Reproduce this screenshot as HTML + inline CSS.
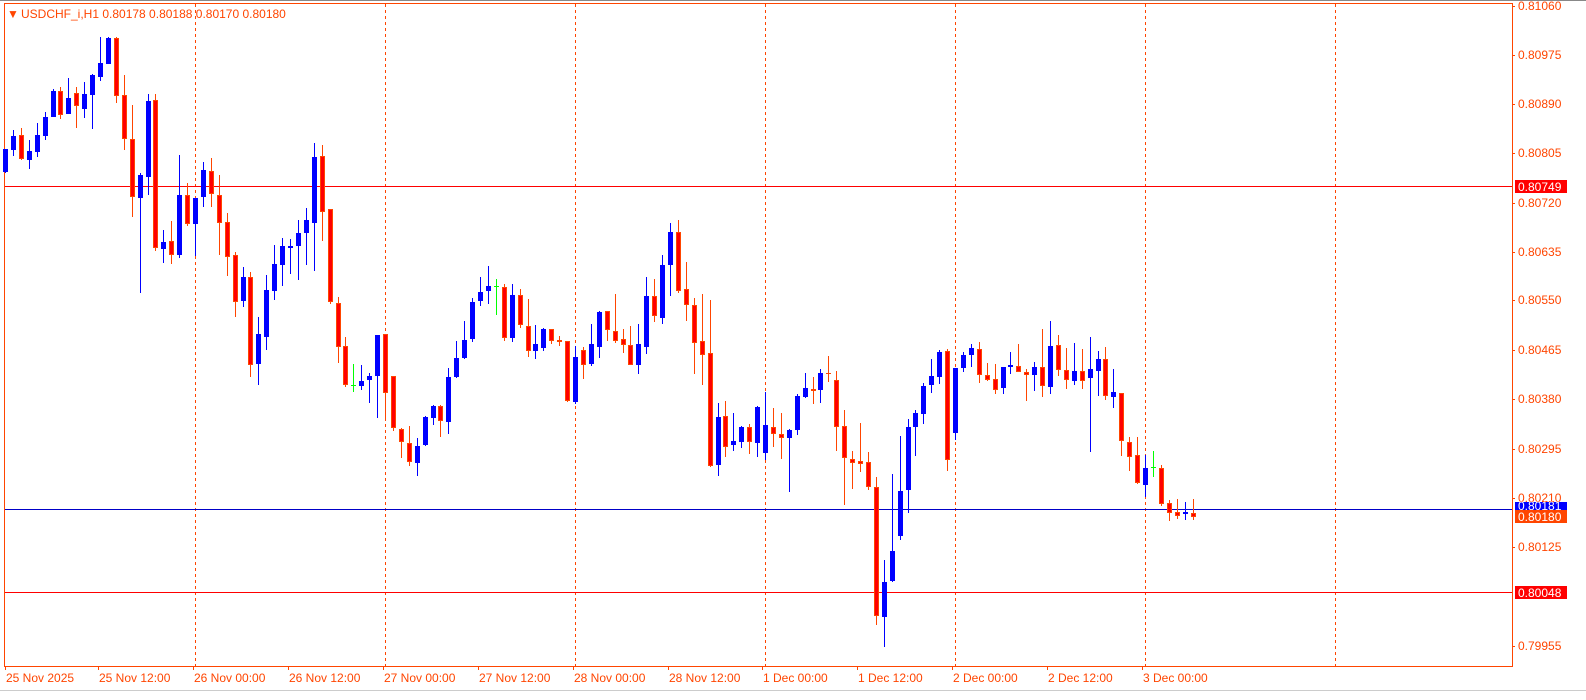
<!DOCTYPE html>
<html><head><meta charset="utf-8"><style>
html,body{margin:0;padding:0;background:#fff;width:1586px;height:700px;overflow:hidden}
svg{display:block}
text{font-family:"Liberation Sans",sans-serif;font-size:12px}
</style></head><body>
<svg id="s" width="1586" height="700" xmlns="http://www.w3.org/2000/svg">
<rect x="0" y="0" width="1586" height="700" fill="#fff"/>
<line x1="0" y1="0.5" x2="1586" y2="0.5" stroke="#888"/>
<line x1="0" y1="690.5" x2="1586" y2="690.5" stroke="#ccc"/>
<rect x="4.5" y="3.5" width="1508" height="663" fill="none" stroke="#ff4500"/>
<g id="grid" stroke="#ff4500" stroke-dasharray="3,3"></g>
<line x1="5" y1="186.5" x2="1512" y2="186.5" stroke="#ff0000"/>
<line x1="5" y1="509.5" x2="1512" y2="509.5" stroke="#0000c8"/>
<line x1="5" y1="592.5" x2="1512" y2="592.5" stroke="#ff0000"/>
<g id="c"></g>
<g id="ax" fill="#ff4500"></g>
<text x="7" y="18" fill="#ff4500" font-size="10">▼</text>
<text x="21" y="18" fill="#ff4500">USDCHF_i,H1  0.80178 0.80188 0.80170 0.80180</text>
<rect x="1515" y="180" width="52" height="13" fill="#ff0000"/>
<text x="1518" y="191" fill="#fff">0.80749</text>
<rect x="1515" y="502" width="52" height="8" fill="#0000ff"/>
<text x="1518" y="510" fill="#fff">0.80181</text>
<rect x="1515" y="510" width="52" height="13" fill="#ff4500"/>
<text x="1518" y="521" fill="#fff">0.80180</text>
<rect x="1515" y="586" width="52" height="13" fill="#ff0000"/>
<text x="1518" y="597" fill="#fff">0.80048</text>
</svg>
<script>
var NS="http://www.w3.org/2000/svg";
function el(p,n,a,t){var e=document.createElementNS(NS,n);for(var k in a)e.setAttribute(k,a[k]);if(t)e.textContent=t;p.appendChild(e);return e;}
var g=document.getElementById('grid');
[195,385,575,765,955,1145,1335].forEach(function(x){el(g,'line',{x1:x+.5,y1:4,x2:x+.5,y2:666});});
var ax=document.getElementById('ax');
var labs=[["0.81060",6],["0.80975",55],["0.80890",104],["0.80805",153],["0.80720",203],["0.80635",252],["0.80550",300],["0.80465",350],["0.80380",399],["0.80295",449],["0.80210",498],["0.80125",547],["0.79955",646]];
labs.forEach(function(l){el(ax,'rect',{x:1512,y:l[1],width:3,height:1});el(ax,'text',{x:1518,y:l[1]+4},l[0]);});
var tl=[["25 Nov 2025",6],["25 Nov 12:00",99],["26 Nov 00:00",194],["26 Nov 12:00",289],["27 Nov 00:00",384],["27 Nov 12:00",479],["28 Nov 00:00",574],["28 Nov 12:00",669],["1 Dec 00:00",763],["1 Dec 12:00",858],["2 Dec 00:00",953],["2 Dec 12:00",1048],["3 Dec 00:00",1143]];
tl.forEach(function(l){el(ax,'text',{x:l[1],y:682},l[0]);el(ax,'rect',{x:l[1]-1,y:666,width:1,height:4});});
var z1="b 363 435 363 432|b 303 383 321 366|r 297 395 318 392|b 333 423 369 396|b 282 386 318 371|b 249 335 264 323|b 180 263 186 263|r 174 272 186 257|b 147 254 207 254|r 174 297 192 230|b 159 269 195 239|b 135 302 138 197|b 20 155 99 143|b 20 104 23 104|r 20 221 23 200|r 138 365 198 332|r 228 569 330 509|b 434 800 440 512|b 195 503 216 446|r 195 671 213 662|b 609 707 645 665|r 582 710 642 683|b 381 692 501 683|r 465 596 501 590|b 510 686 510 590|b 402 539 426 509|r 390 539 429 500|r 441 683 501 587|r 555 749 585 689|r 675 872 684 827|b 719 842 752 824|r 735 1055 752 1019|b 872 1079 924 1016|b 746 974 791 932|b 653 821 710 794|b 632 779 656 713|b 635 743 656 662|b 578 761 617 656|b 542 713 578 617|b 342 734 387 587|r 350 641 384 553|r 545 833 545 827|r 812 1013 830 965|r 932 1085 962 1079|g 1016 1100 1078 1078|b 1019 1094 1067 1082|b 1043 1133 1052 1064|b 926 1178 926 1052|r 923 1190 923 1103|r 1052 1220 1052 1211";
var z2="r 670 764 673 716|r 665 788 718 776|b 701 818 726 779|b 635 728 638 725|b 600 662 605 641|r 600 698 603 650|b 486 689 513 653|b 405 518 456 515|b 342 458 399 455|b 270 407 282 398|b 207 296 252 281|b 174 290 234 251|g 213 323 235 235|r 228 404 237 395|b 228 407 261 395|r 243 362 261 353|r 273 452 357 434|b 354 458 414 434|b 363 434 366 425|r 366 413 366 404|r 389 419 399 407|r 404 590 405 589|b 419 596 453 590|r 422 521 432 476|b 350 482 414 473|b 311 455 315 422|r 311 404 312 371|r 260 410 372 404|r 368 440 396 416|r 356 476 417 476|b 350 506 414 476|b 207 443 264 422|r 213 344 264 326|b 138 350 168 332|b 39 266 69 170|r 30 257 69 251|r 161 341 243 293|r 270 506 294 410|r 258 539 405 446|r 278 791 441 788|b 593 818 638 785|r 588 761 635 731|b 626 743 713 725|b 665 734 668 716|r 659 752 668 716|b 605 761 608 719|b 560 770 662 749";
var z3="r 303 422 363 383|r 318 461 384 395|b 369 563 372 395|b 261 386 267 371|b 195 272 240 269|r 207 290 243 251|b 183 287 195 248|r 141 221 195 195|r 189 437 216 362|r 309 602 357 458|r 437 554 460 473|r 350 500 468 476|r 440 557 471 548|r 516 974 546 947|b 773 1040 840 950|b 506 842 746 836|b 389 710 560 698|b 338 626 360 557|b 308 452 318 362|b 225 353 234 320|b 152 257 204 233|b 125 230 131 206|r 122 497 128 464|b 180 401 180 380|b 131 191 138 179|b 104 176 116 140|r 98 227 119 200|r 164 218 200 215|r 167 260 213 248|b 176 260 176 242|b 131 197 170 176|r 104 191 173 191|r 182 281 191 200|b 161 251 176 200|r 59 269 176 236|b 35 260 110 239|r 77 203 107 185|r 116 245 185 215|b 101 233 188 218|r 119 245 188 218|b 83 440 182 209|b 128 266 152 188|r 113 278 152 266|b 182 302 254 269|r 257 452 257 404|r 392 497 407 455|r 392 539 449 536|b 449 578 488 542|g 437 515 485 485|r 479 605 488 599|r 587 653 596 626|r 584 647 623 638|b 593 650 623 629|r 584 650 626 641";
var c=document.getElementById('c');var idx=0;
[[z1,30,3.04],[z2,210,3.08],[z3,310,3.09]].forEach(function(seg){
 seg[0].split('|').forEach(function(s){
  var p=s.split(' '),t=p[0],v=p.slice(1).map(Number).map(function(z){return Math.round(seg[1]+z/seg[2]);});
  var x=Math.round(5+idx*7.917);idx++;
  var col=t=='b'?'#0000ff':(t=='g'?'#00ff00':'#ff4500');
  el(c,'rect',{x:x,y:v[0],width:1,height:Math.max(1,v[1]-v[0]),fill:col});
  var h=Math.max(1,v[3]-v[2]);
  if(t=='g'){el(c,'rect',{x:x-2,y:v[2],width:5,height:1,fill:col});}
  else if(t=='b'){el(c,'rect',{x:x-2,y:v[2],width:5,height:h,fill:'#0000ff'});}
  else{el(c,'rect',{x:x-2,y:v[2],width:5,height:h,fill:'#ff4500'});if(h>2)el(c,'rect',{x:x-1,y:v[2]+1,width:3,height:h-2,fill:'#ff0000'});}
 });
});
</script>
</body></html>
